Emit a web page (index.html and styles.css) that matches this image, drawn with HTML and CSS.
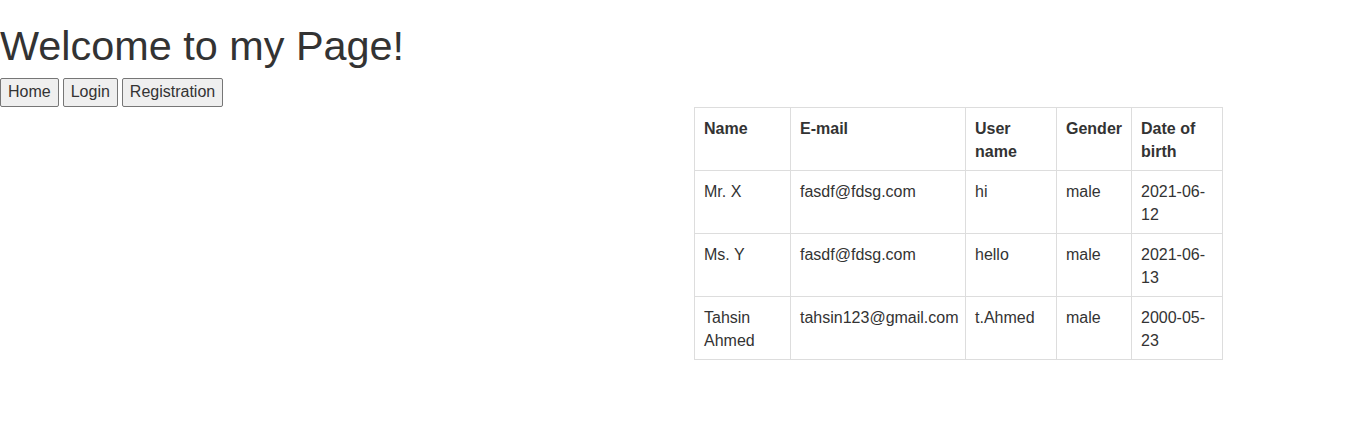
FILE: index.html
```html
<!DOCTYPE html>
<html>
<head>
<meta charset="utf-8">
<title>Welcome</title>
<link rel="stylesheet" href="styles.css">
</head>
<body>
<h1 class="title">Welcome to my Page!</h1>
<nav class="nav">
  <button class="btn">Home</button>
  <button class="btn">Login</button>
  <button class="btn">Registration</button>
</nav>
<div class="table-wrap">
  <table class="users">
    <colgroup>
      <col class="c-name">
      <col class="c-mail">
      <col class="c-user">
      <col class="c-gender">
      <col class="c-dob">
    </colgroup>
    <thead>
      <tr><th>Name</th><th>E-mail</th><th>User name</th><th>Gender</th><th>Date of birth</th></tr>
    </thead>
    <tbody>
      <tr><td>Mr. X</td><td>fasdf@fdsg.com</td><td>hi</td><td>male</td><td>2021-06-12</td></tr>
      <tr><td>Ms. Y</td><td>fasdf@fdsg.com</td><td>hello</td><td>male</td><td>2021-06-13</td></tr>
      <tr><td>Tahsin Ahmed</td><td>tahsin123@gmail.com</td><td>t.Ahmed</td><td>male</td><td>2000-05-23</td></tr>
    </tbody>
  </table>
</div>
</body>
</html>
```

FILE: styles.css
```css
html, body {
  margin: 0;
  padding: 0;
  background: #fff;
}
body {
  font-family: "Liberation Sans", Arial, Helvetica, sans-serif;
  font-size: 16px;
  line-height: 1.428571;
  color: #333;
}
.title {
  font-size: 41.4px;
  font-weight: 500;
  line-height: 45px;
  margin: 24px 0 9px 0;
}
.nav {
  display: flex;
  gap: 4px;
}
.btn {
  font: inherit;
  line-height: inherit;
  color: #333;
  background: #efefef;
  border: 1px solid #767676;
  border-radius: 2px;
  padding: 2px 7px;
  margin: 0;
  height: 29px;
}
.table-wrap {
  margin-left: 694px;
}
.users {
  border-collapse: collapse;
  table-layout: fixed;
  width: 528px;
}
.c-name { width: 96px; }
.c-mail { width: 175px; }
.c-user { width: 91px; }
.c-gender { width: 75px; }
.c-dob { width: 91px; }
.users th,
.users td {
  border: 1px solid #ddd;
  padding: 10px 7px 6px 9px;
  vertical-align: top;
  text-align: left;
  height: 46px;
}
.users th {
  font-weight: bold;
}
```
